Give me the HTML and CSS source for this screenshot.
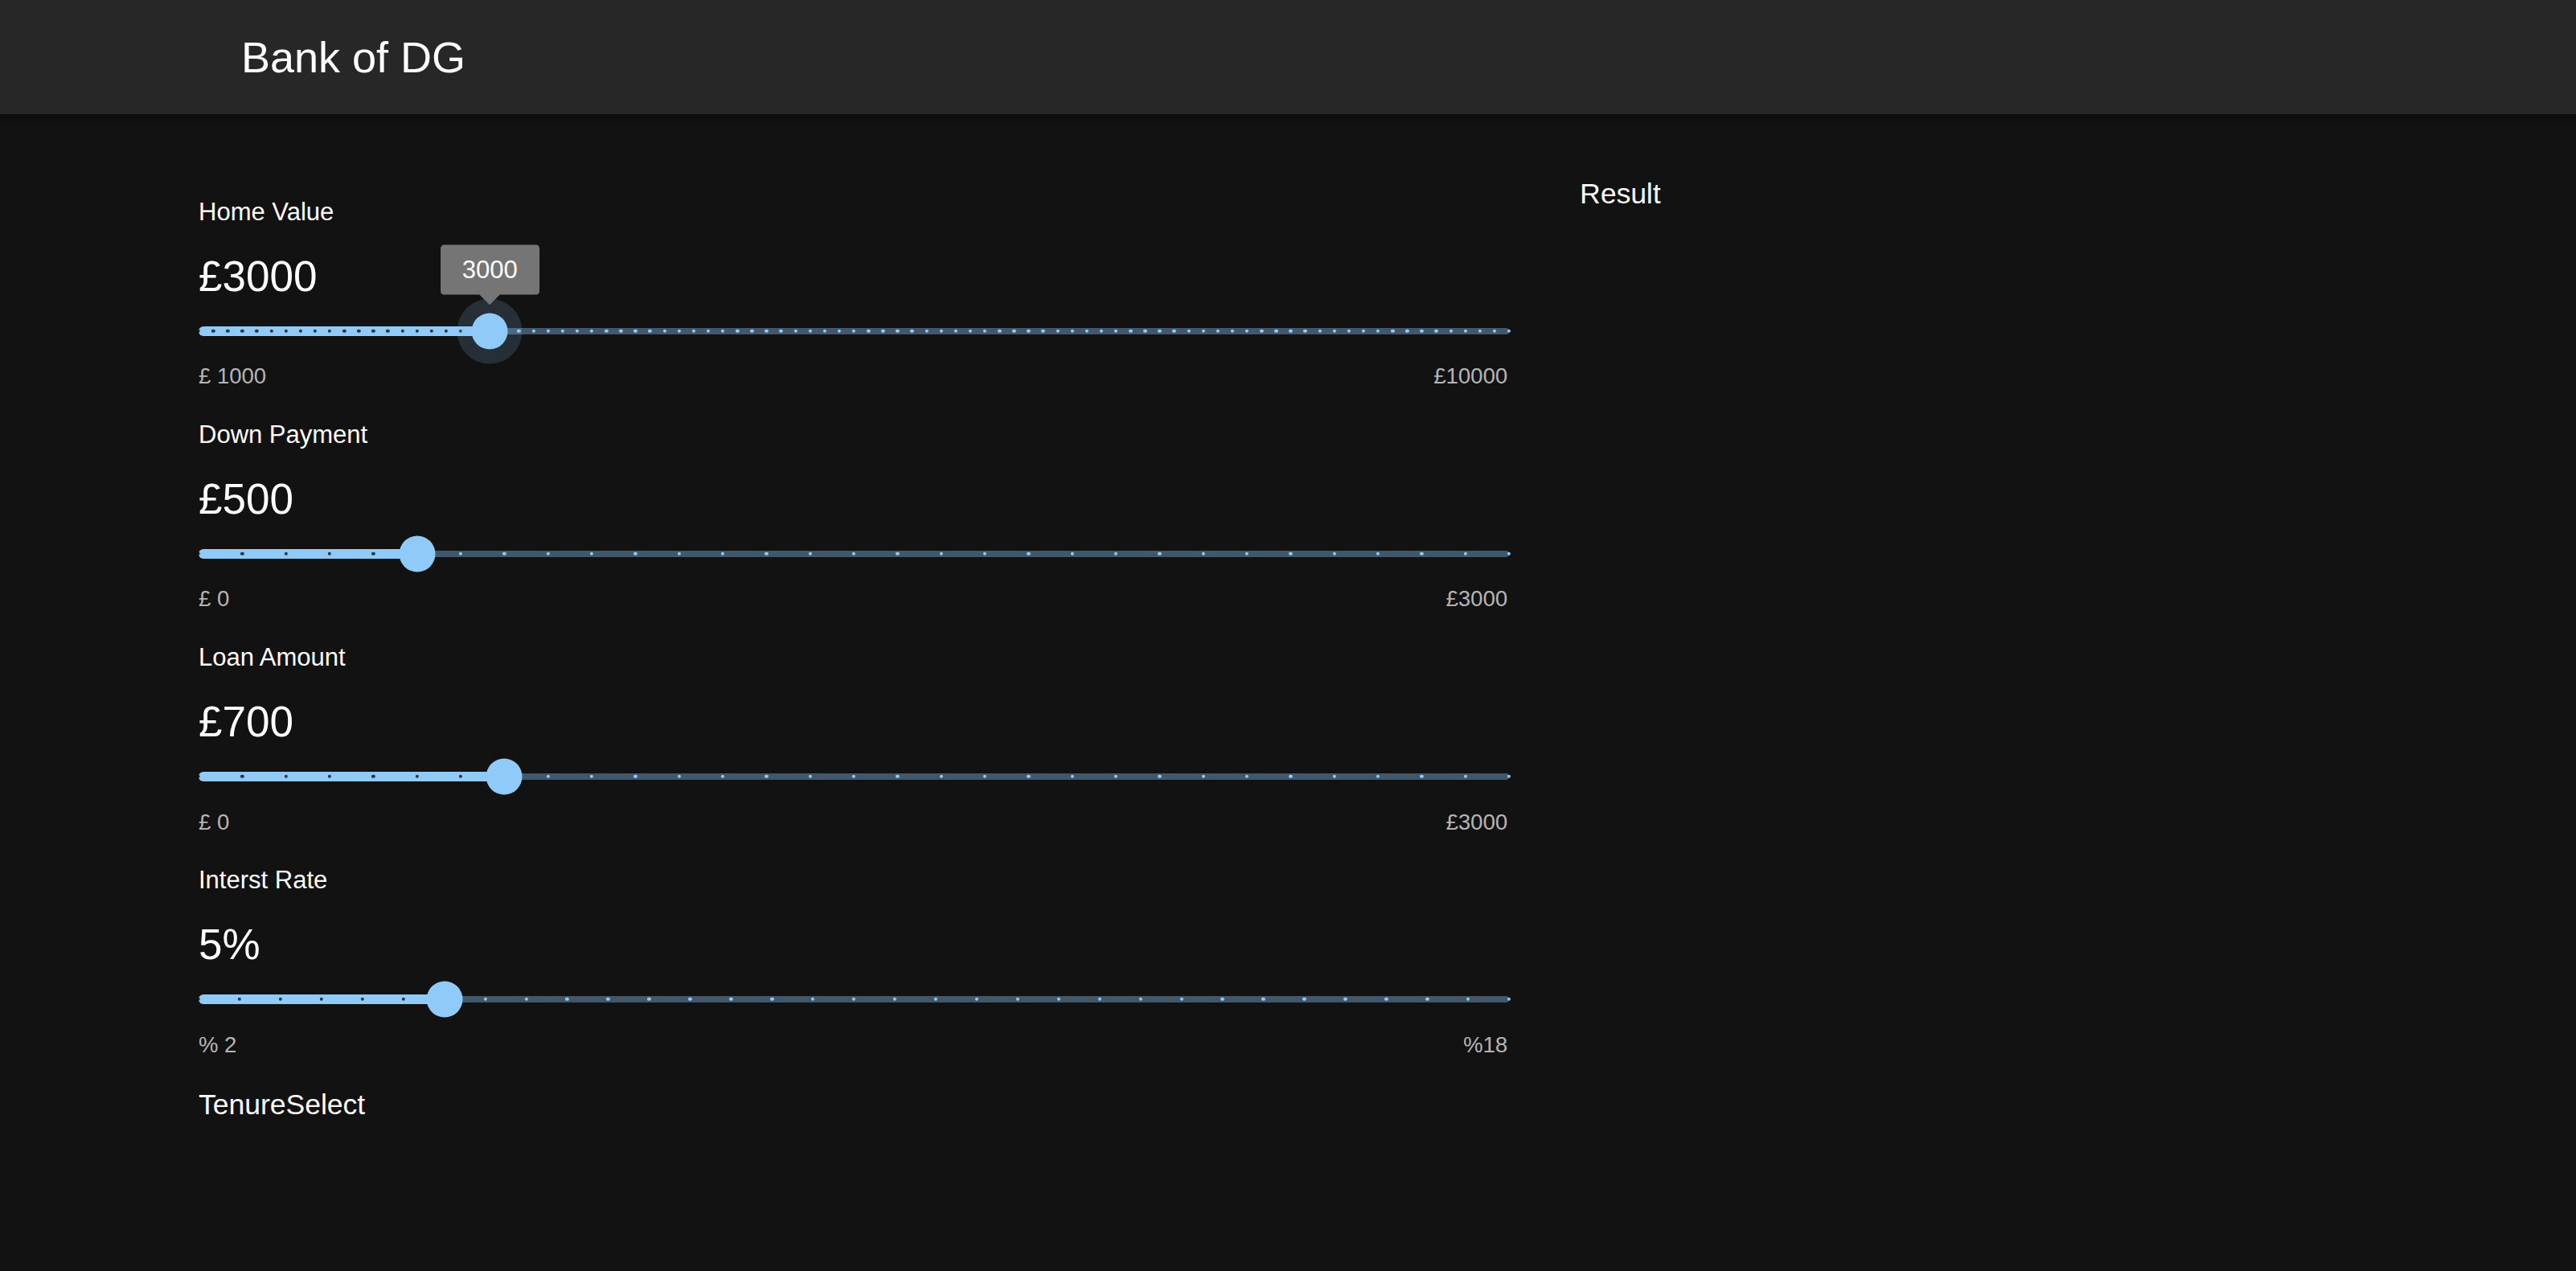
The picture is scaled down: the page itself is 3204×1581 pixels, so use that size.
FILE: index.html
```html
<!DOCTYPE html>
<html lang="en">
<head>
<meta charset="utf-8">
<title>Bank of DG</title>
<link rel="stylesheet" href="styles.css">
</head>
<body>
<header class="appbar">
  <h1 class="brand">Bank of DG</h1>
</header>
<main class="page">
  <section class="form">
    <div class="field">
      <p class="field-label">Home Value</p>
      <p class="field-value">£3000</p>
      <div class="slider" data-min="1000" data-max="10000" data-step="100" data-value="3000" style="--pct:22.2222%">
        <span class="rail"></span>
        <span class="track"></span>
        <span class="marks"></span>
        <span class="thumb thumb-hover"><span class="value-label">3000</span></span>
      </div>
      <div class="range"><span>£ 1000</span><span>£10000</span></div>
    </div>
    <div class="field">
      <p class="field-label">Down Payment</p>
      <p class="field-value">£500</p>
      <div class="slider" data-min="0" data-max="3000" data-step="100" data-value="500" style="--pct:16.6667%">
        <span class="rail"></span>
        <span class="track"></span>
        <span class="marks"></span>
        <span class="thumb"></span>
      </div>
      <div class="range"><span>£ 0</span><span>£3000</span></div>
    </div>
    <div class="field">
      <p class="field-label">Loan Amount</p>
      <p class="field-value">£700</p>
      <div class="slider" data-min="0" data-max="3000" data-step="100" data-value="700" style="--pct:23.3333%">
        <span class="rail"></span>
        <span class="track"></span>
        <span class="marks"></span>
        <span class="thumb"></span>
      </div>
      <div class="range"><span>£ 0</span><span>£3000</span></div>
    </div>
    <div class="field">
      <p class="field-label">Interst Rate</p>
      <p class="field-value">5%</p>
      <div class="slider" data-min="2" data-max="18" data-step="0.5" data-value="5" style="--pct:18.75%">
        <span class="rail"></span>
        <span class="track"></span>
        <span class="marks"></span>
        <span class="thumb"></span>
      </div>
      <div class="range"><span>% 2</span><span>%18</span></div>
    </div>
    <p class="section-title">TenureSelect</p>
  </section>
  <aside class="result">
    <h2 class="section-title">Result</h2>
  </aside>
</main>
<script src="script.js"></script>
</body>
</html>
```

FILE: styles.css
```css
html, body {
  margin: 0;
  padding: 0;
  background: #121212;
  color: #ffffff;
  font-family: "Liberation Sans", Arial, sans-serif;
}

p, h1, h2 {
  margin: 0;
  font-weight: 400;
}

.appbar {
  height: 142px;
  background: #272727;
  display: flex;
  align-items: center;
  padding-left: 300px;
  box-shadow: 0 4px 8px rgba(0, 0, 0, 0.35), 0 2px 4px rgba(0, 0, 0, 0.2);
  position: relative;
  z-index: 1;
}

.brand {
  font-size: 54px;
  line-height: 64px;
  color: #ffffff;
}

.page {
  display: flex;
  align-items: flex-start;
  gap: 88px;
  padding: 79px 0 0 247px;
}

.form {
  width: 1630px;
  padding-top: 25px;
  display: flex;
  flex-direction: column;
  gap: 38.7px;
}

.field {
  display: flex;
  flex-direction: column;
}

.field-label {
  font-size: 31px;
  line-height: 36px;
}

.field-value {
  font-size: 53px;
  line-height: 62px;
  margin-top: 30.6px;
}

.slider {
  position: relative;
  height: 46px;
  margin-top: 14px;
}

.rail {
  position: absolute;
  left: 0;
  right: 0;
  top: 50%;
  height: 8px;
  transform: translateY(-50%);
  border-radius: 4px;
  background: #90caf9;
  opacity: 0.38;
}

.track {
  position: absolute;
  left: 0;
  top: 50%;
  width: var(--pct);
  height: 12px;
  transform: translateY(-50%);
  border-radius: 6px;
  background: #90caf9;
}

.marks {
  position: absolute;
  inset: 0;
}

.mark {
  position: absolute;
  top: 50%;
  width: 4.4px;
  height: 4.4px;
  border-radius: 50%;
  transform: translate(-50%, -50%);
  background: #90caf9;
}

.mark.active {
  background: #121212;
  opacity: 0.8;
}

.thumb {
  position: absolute;
  top: 50%;
  left: var(--pct);
  width: 45px;
  height: 45px;
  border-radius: 50%;
  transform: translate(-50%, -50%);
  background: #90caf9;
}

.thumb-hover {
  box-shadow: 0 0 0 18px rgba(144, 202, 249, 0.16);
}

.value-label {
  position: absolute;
  left: 50%;
  bottom: calc(100% + 22.5px);
  transform: translateX(-50%);
  background: #757575;
  color: #ffffff;
  border-radius: 4.4px;
  padding: 9px 27px;
  font-size: 31px;
  line-height: 44.5px;
  white-space: nowrap;
}

.value-label::before {
  content: "";
  position: absolute;
  left: 50%;
  bottom: 0;
  width: 17.8px;
  height: 17.8px;
  background: #757575;
  transform: translate(-50%, 50%) rotate(45deg);
  z-index: -1;
}

.range {
  display: flex;
  justify-content: space-between;
  margin-top: 17.8px;
  padding-right: 2px;
  font-size: 27.5px;
  line-height: 32px;
  color: rgba(255, 255, 255, 0.7);
}

.section-title {
  font-size: 35.5px;
  line-height: 41px;
  font-weight: 400;
  color: #ffffff;
}

.result {
  flex: 1;
}
```

FILE: script.js
```js
document.querySelectorAll('.slider').forEach(function (slider) {
  var min = parseFloat(slider.dataset.min);
  var max = parseFloat(slider.dataset.max);
  var step = parseFloat(slider.dataset.step);
  var value = parseFloat(slider.dataset.value);
  var marks = slider.querySelector('.marks');
  var n = Math.round((max - min) / step);
  for (var i = 0; i <= n; i++) {
    var v = min + i * step;
    var m = document.createElement('span');
    m.className = 'mark' + (v <= value ? ' active' : '');
    m.style.left = (i / n * 100) + '%';
    marks.appendChild(m);
  }
});
```
